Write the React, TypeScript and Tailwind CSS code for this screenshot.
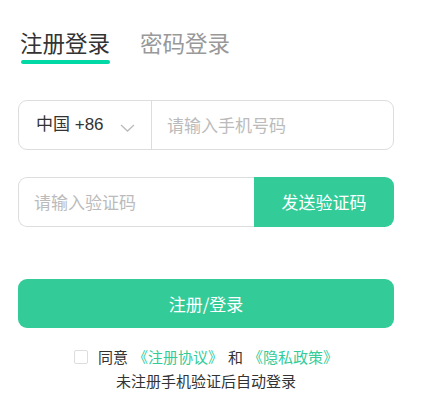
export default function App() {
  return (
    <div className="w-[435px] h-[412px] bg-white px-[18px] pt-[27px] font-['Noto_Sans_CJK_SC','Noto_Sans',sans-serif]">
      <div className="flex items-start gap-[30px] pl-[2px]">
        <div className="flex flex-col items-center">
          <span className="text-[22.5px] leading-[30px] text-[#333]">注册登录</span>
          <div className="mt-[3px] h-[4px] w-[89px] rounded-full bg-[#00d9a6]" />
        </div>
        <span className="text-[22.5px] leading-[30px] text-[#999]">密码登录</span>
      </div>

      <div className="mt-[36px] flex h-[50px] w-[376px] items-center rounded-[9px] border border-[#ddd]">
        <div className="flex h-full w-[133px] items-center border-r border-[#ddd] pl-[17px]">
          <span className="text-[17px] text-[#333] font-['Liberation_Sans','Noto_Sans_CJK_SC',sans-serif]">中国 +86</span>
          <svg className="ml-[16px] mt-[5px]" width="15" height="8" viewBox="0 0 15 8" fill="none">
            <path d="M1 1l6.5 6L14 1" stroke="#bbb" strokeWidth="1.3" />
          </svg>
        </div>
        <span className="pl-[15px] text-[17px] text-[#bbb]">请输入手机号码</span>
      </div>

      <div className="mt-[27px] flex h-[50px] w-[376px]">
        <div className="flex flex-1 items-center rounded-l-[9px] border border-r-0 border-[#ddd] pl-[15px]">
          <span className="text-[17px] text-[#bbb]">请输入验证码</span>
        </div>
        <div className="flex w-[140px] items-center justify-center rounded-r-[9px] bg-[#33cc99] text-[17px] text-white">
          发送验证码
        </div>
      </div>

      <div className="mt-[52px] flex h-[49px] w-[376px] items-center justify-center rounded-[9px] bg-[#33cc99] text-[17px] text-white">
        注册/登录
      </div>

      <div className="mt-[17px] flex flex-col items-center text-[15px] leading-[24px] text-[#333] w-[376px]">
        <div className="flex items-center">
          <div className="mr-[10px] h-[14px] w-[14px] rounded-[2px] border border-[#ddd]" />
          <span>同意</span>
          <span className="ml-[5px] text-[#33cc99]">《注册协议》</span>
          <span className="mx-[5px]">和</span>
          <span className="text-[#33cc99]">《隐私政策》</span>
        </div>
        <div>未注册手机验证后自动登录</div>
      </div>
    </div>
  );
}
